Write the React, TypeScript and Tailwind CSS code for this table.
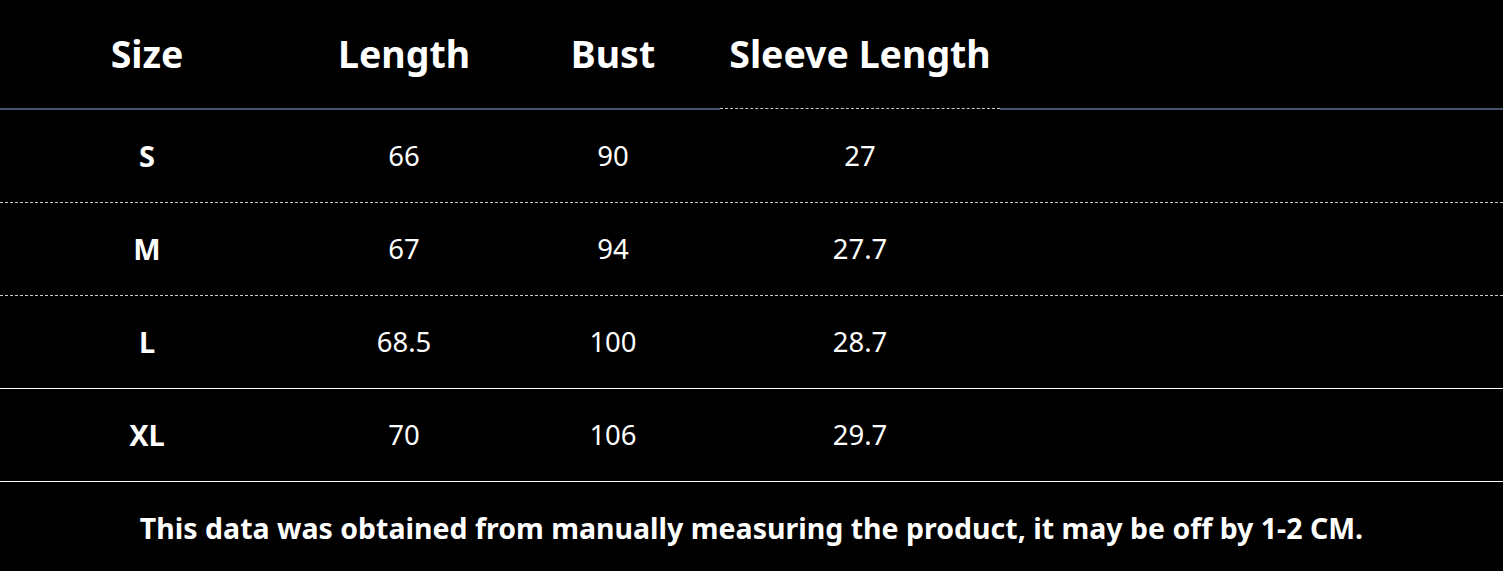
const rows = [
  { size: 'S', length: '66', bust: '90', sleeve: '27', line: 'border-dashed border-[#c3c8d2]' },
  { size: 'M', length: '67', bust: '94', sleeve: '27.7', line: 'border-dashed border-[#c3c8d2]' },
  { size: 'L', length: '68.5', bust: '100', sleeve: '28.7', line: 'border-solid border-white' },
  { size: 'XL', length: '70', bust: '106', sleeve: '29.7', line: 'border-solid border-white' },
]

export default function App() {
  return (
    <div className="w-[1503px] h-[571px] bg-black text-white overflow-hidden font-['Noto_Sans','Open_Sans',sans-serif]">
      <div className="flex text-[37.5px] font-bold">
        <div className="w-[294px] h-[110px] border-b-2 border-[#475569] flex items-center justify-center">Size</div>
        <div className="w-[220px] h-[110px] border-b-2 border-[#475569] flex items-center justify-center">Length</div>
        <div className="w-[206px] h-[110px] border-b-2 border-[#475569] flex items-center justify-center pr-2">Bust</div>
        <div className="w-[280px] h-[110px] flex flex-col">
          <div className="h-[109px] border-b border-dashed border-[#c3c8d2] flex items-center justify-center">Sleeve Length</div>
        </div>
        <div className="flex-1 h-[110px] border-b-2 border-[#475569]" />
      </div>
      {rows.map((r) => (
        <div key={r.size} className={`flex h-[93px] items-center border-b text-[27.5px] ${r.line}`}>
          <div className="w-[294px] text-center font-bold text-[29px]">{r.size}</div>
          <div className="w-[220px] text-center">{r.length}</div>
          <div className="w-[206px] text-center pr-2">{r.bust}</div>
          <div className="w-[280px] text-center">{r.sleeve}</div>
        </div>
      ))}
      <div className="h-[89px] flex items-center justify-center pt-1 text-[28.5px] font-bold">
        This data was obtained from manually measuring the product, it may be off by 1-2 CM.
      </div>
    </div>
  )
}
